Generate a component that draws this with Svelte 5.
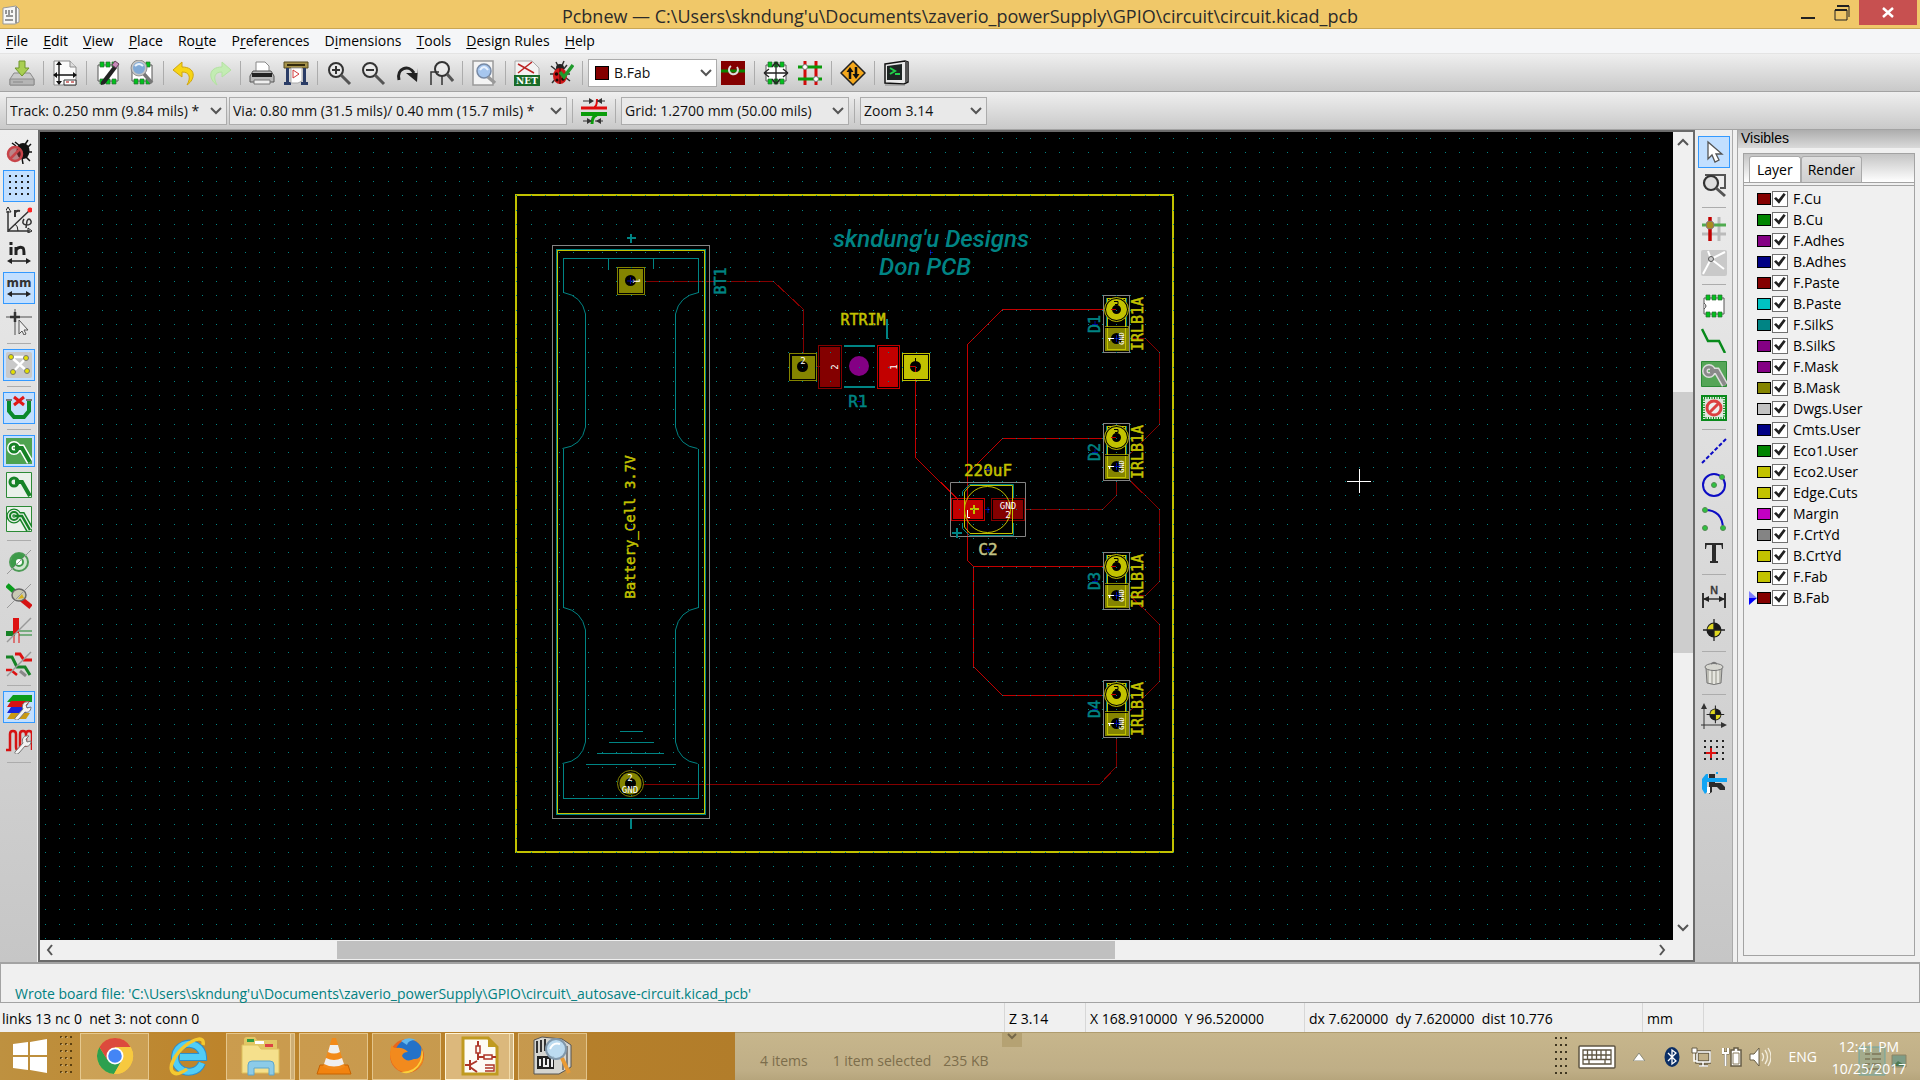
<script>
  const mag = '<circle cx="10" cy="10" r="7" fill="#f4f4f4" fill-opacity=".5" stroke="#333" stroke-width="2"/><path d="M15 15L24 24" stroke="#555" stroke-width="3"/>';
  const chips = '<path d="M3 5h20v16H3z" fill="#fff" stroke="#555"/><path d="M5 2h4v5H5zM11 2h4v5h-4zM17 2h4v5h-4zM5 19h4v5H5zM11 19h4v5h-4zM17 19h4v5h-4z" fill="#00c21c" stroke="#2c6b34" stroke-width=".7"/>';
  const padTrack = '<path d="M9 10H16L24 24" fill="none" stroke-width="4" /><circle cx="8" cy="10" r="4" fill="none" stroke-width="3"/>';
  const target = '<circle cx="13" cy="13" r="7.5" fill="#1a1a1a"/><path d="M13 13V6.500A6.500 6.500 0 0 0 6.500 13zM13 13V19.500A6.500 6.500 0 0 0 19.500 13z" fill="#e0d820"/><path d="M13 2V24M2 13H24" stroke="#222" stroke-width="1.300"/>';
  const wrench = '<path d="M9 24l8-9c-2-4 1-8 6-7l-3 3 1 3 4-1c0 5-4 6-6 5l-6 7c-2 2-5 1-4-1z" fill="#f2f2f2" stroke="#777"/>';

  const icons = {
    save: '<path d="M5 13h16l4 6v6H1v-6z" fill="#c9c9c9" stroke="#8b8b8b"/><path d="M1 19h24v6H1z" fill="#b5b5b5" stroke="#8b8b8b"/><path d="M10 1h6v7h4l-7 8-7-8h4z" fill="#a9cf52" stroke="#6e952b"/><path d="M4 22h10" stroke="#888"/>',
    page: '<path d="M2 1h16l6 6v18H2z" fill="#fafafa" stroke="#8a8a8a"/><path d="M18 1v6h6" fill="#ddd" stroke="#8a8a8a"/><path d="M7 2v22M2 15h22" stroke="#111" stroke-width="1.300"/><path d="M7 1l3 4H4zM7 25l3-4H4zM1 15l4-3v6zM25 15l-4-3v6z" fill="#111"/><path d="M12 20h12v5H12z" fill="#fff" stroke="#333"/><path d="M14 22h3M19 22h3" stroke="#a00"/>',
    modedit: chips + '<path d="M6 22L19 5l3 3L10 24l-4 1z" fill="#222"/><path d="M17 5l3-4 4 3-3 4z" fill="#c989b8" stroke="#64405c"/>',
    modview: chips + '<circle cx="10" cy="8" r="7" fill="#7fa9d6" stroke="#c4c4c4" stroke-width="2"/><circle cx="10" cy="8" r="8" fill="none" stroke="#777" stroke-width=".7"/><path d="M6 6q4-4 8 0" stroke="#e9f3fc" fill="none" stroke-width="2"/><path d="M15 14l8 9" stroke="#777" stroke-width="3.500"/>',
    undo: '<path d="M10 2L1 10l9 7v-5c8 0 9 6 5 13 9-6 9-18-5-18z" fill="#f7d515" stroke="#cfa50f"/>',
    redo: '<path d="M16 2l9 8-9 7v-5c-8 0-9 6-5 13C2 19 2 7 16 7z" fill="#c3ecb3" stroke="#b3e2a1"/>',
    print: '<path d="M7 2h9l4 4v8H7z" fill="#fff" stroke="#888"/><path d="M4 11h18l3 5v6H1v-6z" fill="#bbb" stroke="#555"/><path d="M3 13h20v4H3z" fill="#222"/><path d="M5 20h16v4H5z" fill="#efefef" stroke="#777"/>',
    plot: '<path d="M1 2h24v6H1z" fill="#a5924a" stroke="#574b20"/><path d="M4 5h18" stroke="#332a0c" stroke-width="2"/><path d="M3 8h3v14h2v3H1v-3h2zM20 8h3v14h2v3h-7v-3h2z" fill="#2a3c66"/><path d="M8 8h11v13l-4 2H8z" fill="#fff" stroke="#aaa"/><path d="M10 10v8l6-4z" fill="none" stroke="#d23a3a"/>',
    zoomin: mag + '<path d="M6 10h8M10 6v8" stroke="#333" stroke-width="2"/>',
    zoomout: mag + '<path d="M6 10h8" stroke="#333" stroke-width="2"/>',
    refresh: '<path d="M5 20C2 8 15 4 20 13" fill="none" stroke="#222" stroke-width="3"/><path d="M12 13h12V8l-1 14z" fill="#222"/>',
    fit: '<circle cx="14" cy="9" r="7" fill="#f4f4f4" fill-opacity=".5" stroke="#333" stroke-width="2"/><path d="M19 14l6 7" stroke="#555" stroke-width="3"/><path d="M3 25V12h8M14 25v-9" stroke="#333" fill="none" stroke-width="1.500"/>',
    find: '<path d="M2 1h20v24H2z" fill="#f4f4f4" stroke="#9b9b9b" stroke-width="1.500"/><circle cx="13" cy="11" r="7" fill="#a6c6ee" stroke="#7789a4" stroke-width="1.500"/><path d="M9 10q4-6 8 0" fill="none" stroke="#e8f2ff" stroke-width="2"/><path d="M17 17l7 6" stroke="#999" stroke-width="3.500"/>',
    net: '<path d="M1 1h17l7 7v17H1z" fill="#f3f3f3" stroke="#aaa"/><path d="M4 4l16 9M4 13L18 2" stroke="#b22" stroke-width="1.500"/><path d="M0 15h26v11H0z" fill="#186b28"/><text x="13" y="24" text-anchor="middle" font-family="DejaVu Serif" font-weight="700" font-size="9" fill="#fff">NET</text>',
    drc: '<path d="M3 6l19 15M2 14h20M4 23L19 5M8 2l3 6M16 1l-3 7" stroke="#333" stroke-width="1.500"/><circle cx="12" cy="8" r="4" fill="#222"/><ellipse cx="12" cy="16" rx="7" ry="8" fill="#cf1717"/><path d="M12 8v16" stroke="#300"/><circle cx="8.500" cy="14" r="1.800" fill="#200"/><circle cx="15" cy="19" r="1.800" fill="#200"/><circle cx="9" cy="20" r="1.500" fill="#200"/><path d="M12 12l4 5 9-12" fill="none" stroke="#1f9a2c" stroke-width="3.500"/>',
    pair: '<path d="M1 1h24v24H1z" fill="#840000"/><path d="M1 11h24" stroke="#0a8400" stroke-width="3"/><path d="M11 6a4.500 4.500 0 1 0 6 1" fill="none" stroke="#ddd" stroke-width="2"/>',
    modmode: chips + '<path d="M2 13h22M13 3v20" stroke="#222" stroke-width="1.300"/><path d="M1 13l5-4M1 13l5 4M25 13l-5-4M25 13l-5 4M13 2l4 5M13 2l-4 5M13 24l4-5M13 24l-4-5" stroke="#222" stroke-width="1.300"/>',
    router: '<path d="M8 1v24M19 1v24" stroke="#d20a0a" stroke-width="3"/><path d="M1 7h24M1 19h24" stroke="#0a9a0a" stroke-width="3"/><circle cx="8" cy="7" r="2.500" fill="#fff" stroke="#777"/><circle cx="19" cy="19" r="2.500" fill="#fff" stroke="#777"/>',
    warn: '<path d="M13 1l12 12-12 12L1 13z" fill="#f5a81c" stroke="#222" stroke-width="1.500" stroke-linejoin="round"/><path d="M10 19v-8M16 7v8" stroke="#111" stroke-width="2.500"/><path d="M6.500 12L10 7l3.500 5zM12.500 14l3.500 5 3.500-5z" fill="#111"/>',
    console: '<path d="M2 4l20-3 3 1v20l-4 2-19-1z" fill="#e9e9e9" stroke="#111" stroke-width="1.500"/><path d="M22 1v22l3-2V2z" fill="#555"/><path d="M4 6l15-2v16H4z" fill="#1d2423"/><path d="M7 8l5 3-5 3M12 14h5" fill="none" stroke="#22d04b" stroke-width="2"/><path d="M2 25h20" stroke="#888"/>',
    clearance: '<path d="M0 10h26" stroke="#e00c0c" stroke-width="3"/><path d="M0 16h26" stroke="#0a9c0a" stroke-width="4"/><path d="M13 9q3 0 3-8" fill="none" stroke="#e00c0c" stroke-width="2"/><path d="M16 17q-5 1-5 9" fill="none" stroke="#0a9c0a" stroke-width="3"/><path d="M2 3h8M16 3h8M2 23h6M14 23h8" stroke="#333"/><path d="M8 0l5 3-5 3zM21 0l-5 3 5 3zM6 20l5 3-5 3zM20 20l-5 3 5 3z" fill="#333"/>',
    nodrc: '<path d="M9 3l5 4M22 1l-4 6M18 12l7-7M16 13h10M18 16l6 6M10 7L6 4M16 19l1 6" stroke="#111" stroke-width="1.500"/><ellipse cx="17" cy="12" rx="6.500" ry="8" fill="#111"/><circle cx="9" cy="15" r="7" fill="#903035" fill-opacity=".55" stroke="#c84449" stroke-width="2.500"/><path d="M4 20L14 10" stroke="#c84449" stroke-width="2.500"/>',
    grid: '<path d="M3 3h2M9 3h2M15 3h2M21 3h2M3 9h2M9 9h2M15 9h2M21 9h2M3 15h2M9 15h2M15 15h2M21 15h2M3 21h2M9 21h2M15 21h2M21 21h2" stroke="#222" stroke-width="2"/>',
    polar: '<path d="M2 25V4M2 24h22M3 23L24 3" fill="none" stroke="#333" stroke-width="1.500"/><path d="M2 0l3 5H-1zM26 24l-4-3v5zM12 24q0-5-3-7" fill="none" stroke="#222"/><circle cx="24" cy="3" r="2.500" fill="#f22"/><path d="M9 10V3M9 6q1-3 5-2" fill="none" stroke="#333" stroke-width="2"/><path d="M18 12q-3 5 2 6 6 0 5-4-2-4-4 0l-1 7" fill="none" stroke="#333" stroke-width="1.500"/>',
    inch: '<path d="M5 6v8M5 1v3M10 14V6M10 9q3-4 7-2 1 1 1 7" fill="none" stroke="#222" stroke-width="3"/><path d="M3 20h20" stroke="#222" stroke-width="1.500"/><path d="M1 20l5-3v6zM25 20l-5-3v6z" fill="#222"/>',
    mm: '<text x="13" y="12" text-anchor="middle" font-family="DejaVu Sans" font-weight="700" font-size="12" fill="#333">mm</text><path d="M3 19h20" stroke="#222" stroke-width="1.500"/><path d="M1 19l5-3v6zM25 19l-5-3v6z" fill="#222"/>',
    cursor: '<path d="M9 0v26M0 8h26" stroke="#999" stroke-width="2"/><path d="M9 3v10M4 8h10" stroke="#333" stroke-width="2.500"/><path d="M13 11l9 10h-4l2 4-2 1-2-4-3 3z" fill="#eee" stroke="#555"/>',
    ratsnest: '<rect width="26" height="26" rx="2" fill="#c9c9c9"/><path d="M5 5l16 14M7 20L20 6M5 5h15" fill="none" stroke="#fff" stroke-width="2.500"/><g fill="#e4e000" stroke="#777"><circle cx="5" cy="5" r="2.500"/><circle cx="20" cy="6" r="2.500"/><circle cx="7" cy="20" r="2.500"/><circle cx="21" cy="19" r="2.500"/></g>',
    autodel: '<path d="M3 5v11l5 6h10l5-6V5" fill="none" stroke="#098a2c" stroke-width="4"/><path d="M0 5h6M20 5h6" stroke="#777" stroke-width="2"/><path d="M8 2l10 8M18 2L8 10" stroke="#e01717" stroke-width="3"/>',
    zone1: '<path d="M0 0h26v26H0z" fill="#4ea350"/><g stroke="#fff">' + padTrack.replace('stroke-width="4"', 'stroke-width="7"').replace('stroke-width="3"', 'stroke-width="6"') + '</g><g stroke="#168226">' + padTrack + '</g>',
    zone2: '<path d="M.5.5h25v25H.5z" fill="#eaf1ea" stroke="#2c8a36"/><g stroke="#168226">' + padTrack + '</g>',
    zone3: '<path d="M.5.5h25v25H.5z" fill="#eaf1ea" stroke="#2c8a36"/><g stroke="#168226">' + padTrack.replace('stroke-width="4"', 'stroke-width="8"').replace('stroke-width="3"', 'stroke-width="7"') + '</g><g stroke="#e6efe6">' + padTrack.replace('stroke-width="4"', 'stroke-width="5"').replace('stroke-width="3"', 'stroke-width="4.500"') + '</g><g stroke="#168226">' + padTrack.replace('stroke-width="4"', 'stroke-width="2.500"').replace('stroke-width="3"', 'stroke-width="2"') + '</g>',
    pad: '<circle cx="13" cy="13" r="9" fill="#cfe5cf" stroke="#4d9b56" stroke-width="2"/><path d="M13 4a9 9 0 0 0-6 15L19 7a9 9 0 0 0-6-3z" fill="#3d9a49"/><circle cx="13" cy="13" r="4" fill="#fff" stroke="#3d9a49" stroke-width="2"/><path d="M1 25L25 1" stroke="#999"/>',
    via: '<path d="M1 2l10 9" stroke="#0a9c1c" stroke-width="5"/><path d="M14 15l11 9" stroke="#d51212" stroke-width="5"/><ellipse cx="13" cy="12" rx="7" ry="6" fill="#c9c9b4" stroke="#666" stroke-width="1.500"/><path d="M12 16l4-5 2 4z" fill="#d8b21a"/><path d="M1 25L25 1" stroke="#999"/>',
    track: '<path d="M0 14h9v5H0z" fill="#168226"/><path d="M7 1h6v15H7z" fill="#d11"/><path d="M13 14h13M13 18h13" stroke="#168226"/><path d="M8 16v10M13 16v10" stroke="#d11"/><path d="M1 25L25 1" stroke="#999" stroke-width="1.500"/>',
    contrast: '<path d="M0 6h6l5 10h8l5 8" fill="none" stroke="#168226" stroke-width="3"/><path d="M9 3h5l4 6h8" fill="none" stroke="#d11" stroke-width="3"/><path d="M0 19h5l6 5" fill="none" stroke="#d11" stroke-width="2.500"/><path d="M14 20l6 5" stroke="#888" stroke-width="3"/><path d="M1 25L25 1" stroke="#999" stroke-width="1.500"/>',
    layers: '<path d="M7 1h19v7H1z" fill="#0c9c1c"/><path d="M5 7h19l-4 6H1z" fill="#d51212"/><path d="M5 13h19l-4 6H1z" fill="#1626d8"/><path d="M5 19h19l-4 6H1z" fill="#c99a14"/>' + wrench,
    micro: '<path d="M0 22h4V6q0-3 3-3t3 3v13q0 3 2 3t2-3V6q0-3 3-3t3 3v13M20 6q0-3 3-3t3 3v16" fill="none" stroke="#d51212" stroke-width="2.500"/>' + wrench,
    select: '<path d="M7 3v17l4-4 3 7 4-2-3-6h6z" fill="#fff" stroke="#555" stroke-width="1.300"/>',
    zoomarea: '<path d="M4 2h20v13h-5" fill="none" stroke="#555" stroke-width="2"/><circle cx="10" cy="10" r="7" fill="#ddd" stroke="#333" stroke-width="2.200"/><path d="M15 15l9 8" stroke="#555" stroke-width="3"/>',
    highlight: '<path d="M18 1v24M1 18h24" stroke="#bbb" stroke-width="3"/><path d="M1 9h24" stroke="#50ab50" stroke-width="3"/><path d="M9 1v24" stroke="#c20000" stroke-width="3.500"/><circle cx="9" cy="9" r="4" fill="#a98c1f" stroke="#877"/>',
    localrats: '<rect width="26" height="26" rx="2" fill="#c9c9c9"/><path d="M7 1l3 8L2 24M10 9l14-7M10 9l13 10" fill="none" stroke="#fff" stroke-width="2"/><circle cx="10" cy="9" r="2.500" fill="#ccc" stroke="#555"/>',
    module: chips + '<path d="M3 10q4 3 0 6" fill="#ccc" stroke="#555"/>',
    addtrack: '<path d="M1 2l6 12h11l6 12" fill="none" stroke="#098a1c" stroke-width="2.500"/>',
    zone: '<path d="M.5.5h25v25H.5z" fill="#55a557" stroke="#2c8a36"/><g stroke="#ddd">' + padTrack.replace('stroke-width="4"', 'stroke-width="7"').replace('stroke-width="3"', 'stroke-width="6"') + '</g><g stroke="#8a8a8a">' + padTrack + '</g>',
    keepout: '<path d="M1 1h24v24H1z" fill="#dfe8df" stroke="#0a8a1c" stroke-width="2"/><path d="M3 3h20v20H3z" fill="none" stroke="#0a8a1c" stroke-dasharray="1 1.500" stroke-width="2"/><circle cx="13" cy="13" r="7" fill="#eee" stroke="#dc4040" stroke-width="3"/><path d="M8 18L18 8" stroke="#dc4040" stroke-width="3"/>',
    line: '<path d="M1 25L25 1" stroke="#0c0cc4" stroke-width="2" stroke-dasharray="4 2"/>',
    circle: '<circle cx="13" cy="13" r="11" fill="none" stroke="#0c0cc4" stroke-width="2"/><circle cx="13" cy="13" r="2.500" fill="#2fc23f" stroke="#585"/><circle cx="21" cy="5" r="2.500" fill="#2fc23f" stroke="#585"/>',
    arc: '<path d="M4 4q17 0 18 18" fill="none" stroke="#0c0cc4" stroke-width="2"/><g fill="#2fc23f" stroke="#585"><circle cx="4" cy="4" r="2.500"/><circle cx="4" cy="22" r="2.500"/><circle cx="22" cy="22" r="2.500"/></g>',
    text: '<path d="M5 4h16M13 4v18M9 22h8" stroke="#2b2b2b" stroke-width="2"/><path d="M13 4v18" stroke="#2b2b2b" stroke-width="4"/><path d="M4 3h2l-1 6H4zM22 3h-2l1 6h1z" fill="#2b2b2b"/>',
    dim: '<path d="M2 10v15M24 10v15" stroke="#333" stroke-width="2"/><path d="M3 16h20" stroke="#333" stroke-width="1.500"/><path d="M2 16l6-3v6zM24 16l-6-3v6z" fill="#222"/><text x="13" y="11" text-anchor="middle" font-family="DejaVu Sans" font-size="11" fill="#333" stroke="#333" stroke-width=".4">N</text>',
    target,
    trash: '<path d="M5 8h16l-1 15q-7 3-14 0z" fill="#bdbdb5" stroke="#777"/><path d="M9 10v13M13 10v14M17 10v13" stroke="#f3f3ee" stroke-width="1.500"/><ellipse cx="13" cy="7" rx="9" ry="3.500" fill="#d6d6d0" stroke="#777"/><path d="M10 4q3-3 6 0" fill="none" stroke="#777" stroke-width="1.500"/>',
    origin: '<path d="M3 26V3M0 22h24" stroke="#333"/><path d="M3 0l3 6H0zM26 22l-6-3v6z" fill="#333"/><g transform="translate(4 1) scale(.8)">' + target + '</g>',
    gridorigin: '<path d="M3 4h2M9 4h2M15 4h2M21 4h2M3 10h2M9 10h2M15 10h2M21 10h2M3 16h2M15 16h2M21 16h2M3 22h2M9 22h2M15 22h2M21 22h2" stroke="#222" stroke-width="2"/><path d="M10 11v10M5 16h10" stroke="#d11" stroke-width="2"/>',
    measure: '<path d="M8 3v20l3-2v-5h5l3 3h5v-3l-4-4h-6V3z" fill="#2b2b2b"/><path d="M1 8l4-5h2v4h19v4H6v10L4 23l-3-5z" fill="#12a5f4"/><path d="M6 16h3v6H6z" fill="#fff"/><path d="M15 2h2" stroke="#12a5f4" stroke-width="2"/>',
  };

  const menus = [['', 'F', 'ile'], ['', 'E', 'dit'], ['', 'V', 'iew'], ['', 'P', 'lace'], ['Ro', 'u', 'te'], ['P', 'r', 'eferences'], ['D', 'i', 'mensions'], ['', 'T', 'ools'], ['', 'D', 'esign Rules'], ['', 'H', 'elp']];
  const topA = ['save', '|', 'page', '|', 'modedit', 'modview', '|', 'undo', 'redo', '|', 'print', 'plot', '|', 'zoomin', 'zoomout', 'refresh', 'fit', '|', 'find', '|', 'net', 'drc', '|'];
  const topB = ['pair', '|', 'modmode', 'router', '|', 'warn', '|', 'console'];
  const left = ['nodrc', 'grid', 'polar', 'inch', 'mm', 'cursor', '|', 'ratsnest', '|', 'autodel', '|', 'zone1', 'zone2', 'zone3', '|', 'pad', 'via', 'track', 'contrast', '|', 'layers', 'micro', '|'];
  const right = ['select', 'zoomarea', '|', 'highlight', 'localrats', '|', 'module', 'addtrack', 'zone', 'keepout', '|', 'line', 'circle', 'arc', 'text', '|', 'dim', 'target', '|', 'trash', '|', 'origin', 'gridorigin', 'measure'];
  const pressed = new Set(['grid', 'mm', 'ratsnest', 'autodel', 'zone1', 'layers', 'select']);

  const layers = [
    ['F.Cu', '#840000'], ['B.Cu', '#008400'], ['F.Adhes', '#840084'], ['B.Adhes', '#000084'], ['F.Paste', '#840000'],
    ['B.Paste', '#00c2c2'], ['F.SilkS', '#008484'], ['B.SilkS', '#840084'], ['F.Mask', '#840084'], ['B.Mask', '#848400'],
    ['Dwgs.User', '#c2c2c2'], ['Cmts.User', '#000084'], ['Eco1.User', '#008400'], ['Eco2.User', '#c2c200'], ['Edge.Cuts', '#c2c200'],
    ['Margin', '#c200c2'], ['F.CrtYd', '#848484'], ['B.CrtYd', '#c2c200'], ['F.Fab', '#c2c200'], ['B.Fab', '#840000'],
  ];

  let dots = '';
  for (let j = -4; j < 56; j++) {
    for (let i = -32; i < 90; i++) {
      dots += `M${Math.round(502 + i * 14.281)} ${Math.round(181 + j * 14.281)}h1v1h-1z`;
    }
  }
  const diodes = [{ n: 'D1', y: 0 }, { n: 'D2', y: 128 }, { n: 'D3', y: 257 }, { n: 'D4', y: 385 }];
</script>

{#snippet tools(list)}
  {#each list as name}
    {#if name === '|'}
      <span class="sep"></span>
    {:else}
      <button class="tool" class:on={pressed.has(name)} aria-label={name}>
        <svg width="26" height="26" viewBox="0 0 26 26">{@html icons[name]}</svg>
      </button>
    {/if}
  {/each}
{/snippet}

{#snippet combo(label, value, cls, swatch)}
  <div class="combo {cls}">
    {#if swatch}<span class="swatch big"></span>{/if}
    <select aria-label={label}><option>{value}</option></select>
    <svg class="chev" width="12" height="8" viewBox="0 0 12 8"><path d="M1 1l5 5 5-5" fill="none" stroke="#555" stroke-width="2" /></svg>
  </div>
{/snippet}

<div class="app">
  <header class="title">
    <svg class="appicon" width="20" height="20" viewBox="0 0 20 20"><path d="M1 3l13-2 3 3v13l-4 2H1z" fill="#f6f6f6" stroke="#999" /><path d="M14 2v16M4 5v4M7 5v5M10 5v3M4 11h7M3 15h8" stroke="#777" stroke-width="1.500" /></svg>
    <h1>Pcbnew — C:\Users\skndung'u\Documents\zaverio_powerSupply\GPIO\circuit\circuit.kicad_pcb</h1>
    <div class="winctl">
      <button aria-label="Minimize"><svg width="16" height="16" viewBox="0 0 16 16"><path d="M1 13h14" stroke="#222" stroke-width="2" /></svg></button>
      <button aria-label="Restore"><svg width="16" height="16" viewBox="0 0 16 16"><path d="M3 1h12v11M1 5h12v10H1z" fill="none" stroke="#222" /><path d="M1 5h12M3 1h12" stroke="#222" stroke-width="2" /></svg></button>
      <button class="close" aria-label="Close"><svg width="12" height="12" viewBox="0 0 12 12"><path d="M1 1l10 9M11 1L1 10" stroke="#fff" stroke-width="2.500" /></svg></button>
    </div>
  </header>

  <nav class="menu">
    {#each menus as [a, b, c]}<button>{a}<u>{b}</u>{c}</button>{/each}
  </nav>

  <div class="bar">
    {@render tools(topA)}
    {@render combo('Layer', 'B.Fab', 'layer', true)}
    {@render tools(topB)}
  </div>
  <div class="bar">
    {@render combo('Track', 'Track: 0.250 mm (9.84 mils) *', 'trackw', false)}
    {@render combo('Via', 'Via: 0.80 mm (31.5 mils)/ 0.40 mm (15.7 mils) *', 'viaw', false)}
    {@render tools(['|', 'clearance', '|'])}
    {@render combo('Grid', 'Grid: 1.2700 mm (50.00 mils)', 'gridw', false)}
    <span class="sep"></span>
    {@render combo('Zoom', 'Zoom 3.14', 'zoomw', false)}
  </div>

  <main>
    <aside class="vbar">{@render tools(left)}</aside>

    <section class="frame">
      <div class="canvas">
        <svg class="board" width="100%" height="100%">
          <g transform="translate(-40 -132)">
            <g fill="none" shape-rendering="crispEdges">
              <g stroke="#840000">
                <path d="M644 281.500H773.500L803.500 309.500V354" />
                <path d="M816 366.500H820" />
                <path d="M1128 338.500H1145.500L1159.500 352.500V424.500L1130 454" />
                <path d="M1116.500 480V495.500L1102.500 509.500H1024" />
                <path d="M1130 480.500L1159.500 509.500V581.500L1145.500 595.500H1128M1130 595.500L1159.500 624.500V681.500L1130 711" />
                <path d="M1116.500 738V766.500L1099.500 784.500H643" />
              </g>
              <g stroke="#c20000">
                <path d="M915.500 366.500V457.500L958 499.500" />
                <path d="M1104 309.500H1002.500L967.500 344.500V560.500L973.500 566.500H1104M1104 438.500H1002.500L967.500 473.500M973.500 566.500V666.500L1002.500 695.500H1104" />
              </g>
              <rect x="516" y="195" width="657" height="657" stroke="#c2c200" stroke-width="2" />
              <rect x="552.500" y="245.500" width="157" height="573" stroke="#848484" />
              <rect x="556.500" y="249.500" width="149" height="565" stroke="#008484" />
              <rect x="557.500" y="250.500" width="147" height="563" stroke="#c2c200" />
            </g>

            <g fill="none" stroke="#008484">
              <path shape-rendering="crispEdges" d="M563.500 292.500V258.500H698.500V292.500M585.500 314V427M675.500 314V427M563.500 449V607.500M698.500 449V607.500M585.500 630V742M675.500 630V742M563.500 764V798.500H698.500V764M608.500 259V270M653.500 259V269" />
              <path d="M563.500 292.500Q582 296 585.500 314M698.500 292.500Q679 296 675.500 314M585.500 427Q582 446 562.500 448.500M675.500 427Q679 446 697.500 448.500M563.500 607.500Q582 611 585.500 630M698.500 607.500Q679 611 675.500 630M585.500 742Q582 761 562.500 763.500M675.500 742Q679 761 697.500 763.500" />
              <path shape-rendering="crispEdges" d="M620 731.500H643M609 742.500H654M597 753.500H664M586 764.500H676" />
              <path shape-rendering="crispEdges" stroke-width="2" d="M627 238H636M631 234V243M631 819V829M844 346H875M844 387H875M887 319V339" />
            </g>

            <g shape-rendering="crispEdges">
              <rect x="617.500" y="267.500" width="27" height="27" fill="none" stroke="#848400" />
              <rect x="619" y="269" width="24" height="24" fill="#848400" />
              <rect x="789.500" y="353.500" width="27" height="27" fill="none" stroke="#848400" />
              <rect x="792" y="356" width="23" height="23" fill="#848400" />
              <rect x="818.500" y="345.500" width="23" height="43" fill="none" stroke="#840000" />
              <rect x="820" y="347" width="20" height="40" fill="#840000" />
              <rect x="877.500" y="345.500" width="22" height="43" fill="none" stroke="#c20000" />
              <rect x="879" y="347" width="19" height="40" fill="#c20000" />
              <rect x="902.500" y="353.500" width="27" height="27" fill="none" stroke="#c2c200" />
              <rect x="904" y="355" width="24" height="24" fill="#c2c200" />
            </g>
            <circle cx="630.500" cy="280.500" r="5.500" />
            <circle cx="802.500" cy="366.500" r="5.500" />
            <circle cx="915.500" cy="366.500" r="5.500" />
            <path d="M915.500 358V366" stroke="#000" />
            <path d="M910 366.500H915.500V372" fill="none" stroke="#c20000" />
            <circle cx="859" cy="366" r="10" fill="#840084" />
            <circle cx="630.500" cy="783.500" r="13" fill="none" stroke="#848400" />
            <circle cx="630.500" cy="783.500" r="11" fill="#848400" />
            <circle cx="630.500" cy="783.500" r="5.500" />

            <rect x="951.500" y="498.500" width="33" height="22" fill="none" stroke="#c20000" />
            <rect x="953" y="500" width="30" height="19" fill="#c20000" />
            <rect x="991.500" y="498.500" width="33" height="22" fill="none" stroke="#840000" />
            <rect x="993" y="500" width="30" height="19" fill="#840000" />
            <g fill="none">
              <path d="M950.500 482.500H1025.500V536.500H950.500Z" stroke="#848484" />
              <path d="M962.500 496V491.500L969.500 484.500H1013.500V498M1013.500 523V535.500H969.500L962.500 528.500V523" stroke="#008484" />
              <path d="M970 485.500H1012.500V533.500H970L964.500 527V492Z" stroke="#c2c200" />
              <circle cx="987.500" cy="509.500" r="23" stroke="#c2c200" />
              <path d="M970 509H979M974 505V514" stroke="#c2c200" stroke-width="2" />
              <path d="M952 533H962M957 528V538" stroke="#008484" stroke-width="2" />
            </g>

            {#each diodes as d}
              <g transform="translate(0 {d.y})">
                <rect x="1105" y="326" width="24" height="25" fill="#848400" />
                <g fill="none" shape-rendering="crispEdges">
                  <rect x="1103.500" y="295.500" width="26" height="57" stroke="#848484" />
                  <path d="M1106.500 326V298.500H1126.500V326" stroke="#008484" />
                  <rect x="1107.500" y="298.500" width="18" height="51" stroke="#c2c200" />
                  <path d="M1105 327.500H1128" stroke="#000" />
                </g>
                <circle cx="1116.500" cy="309.500" r="12" fill="#000" stroke="#c2c200" />
                <circle cx="1116.500" cy="309.500" r="7.500" fill="none" stroke="#c2c200" stroke-width="6" />
                <path d="M1111 309.500H1116" stroke="#c20000" />
                <path d="M1114 301.500H1118V304.500H1115" fill="none" stroke="#000" />
                <circle cx="1116.500" cy="338.500" r="5.500" />
                <path d="M1113 338.500H1120M1116.500 335V342M1092 324.500H1098M1095 321V327" stroke="#0000a0" />
                <text class="w" transform="translate(1124 338.500) rotate(-90)">GND</text>
                <path d="M1108 338.500H1114M1109.500 338V341" stroke="#fff" fill="none" />
                <text class="silk s15" transform="translate(1100 324) rotate(-90)">{d.n}</text>
                <text class="fab s15" transform="translate(1143 324) rotate(-90)">IRLB1A</text>
              </g>
            {/each}

            <text class="head" x="931" y="247">skndung′u Designs</text>
            <text class="head" x="925" y="275">Don PCB</text>
            <text class="silk s15" transform="translate(726 281) rotate(-90)">BT1</text>
            <text class="fab s14" transform="translate(635 527) rotate(-90)">Battery_Cell 3.7V</text>
            <text class="fab s15" x="863" y="325">RTRIM</text>
            <text class="silk s16" x="858" y="407">R1</text>
            <text class="fab s16" x="988" y="476">220uF</text>
            <text class="mod s16" x="988" y="555">C2</text>
            <text class="w big" x="1008" y="509">GND</text>
            <text class="w big" x="1008" y="518">2</text>
            <text class="w big" x="630" y="781">2</text>
            <text class="w big" x="630" y="793">GND</text>
            <text class="w big" transform="translate(633 281) rotate(90)">1</text>
            <text class="w big" transform="translate(838 367) rotate(-90)">2</text>
            <text class="w big" transform="translate(897 367) rotate(-90)">1</text>
            <text class="w big" x="803" y="364">2</text>
            <path d="M967.500 510V517.500H970" fill="none" stroke="#fff" />
            <path d="M627 281H634M630.500 277V284M985 509.500H990M988 507V513M985 549.500H990M988 547V552M985 469.500H990M988 467V472M930 252.500H933M930.500 250V255M628 528.500H633M857 401.500H861" stroke="#0000a0" />
            <path d={dots} fill="#008484" shape-rendering="crispEdges" />
            <path d="M1347 481.500H1371M1359.500 469V493" stroke="#fff" shape-rendering="crispEdges" />
          </g>
        </svg>
      </div>
      <div class="vscroll">
        <svg width="12" height="8" viewBox="0 0 12 8"><path d="M1 7l5-5 5 5" fill="none" stroke="#555" stroke-width="2" /></svg>
        <div class="vtrack"><span class="pre"></span><span class="thumb"></span><span class="post"></span></div>
        <svg width="12" height="8" viewBox="0 0 12 8"><path d="M1 1l5 5 5-5" fill="none" stroke="#555" stroke-width="2" /></svg>
      </div>
      <div class="hscroll">
        <svg width="8" height="12" viewBox="0 0 8 12"><path d="M6 1L2 6l4 5" fill="none" stroke="#555" stroke-width="2" /></svg>
        <div class="htrack"><span class="pre"></span><span class="thumb"></span><span class="post"></span></div>
        <svg width="8" height="12" viewBox="0 0 8 12"><path d="M2 1l4 5-4 5" fill="none" stroke="#555" stroke-width="2" /></svg>
      </div>
    </section>

    <aside class="vbar rightbar">{@render tools(right)}</aside>

    <aside class="visibles">
      <h2>Visibles</h2>
      <div class="book">
        <div class="tabs" role="tablist">
          <button role="tab" aria-selected="true" class="active">Layer</button>
          <button role="tab" aria-selected="false">Render</button>
        </div>
        <ul>
          {#each layers as [name, color], i}
            <li>
              <span class="mark">{#if i === 19}<svg width="8" height="14" viewBox="0 0 8 14"><path d="M0 0l8 7H0z" fill="#8080ff" /><path d="M0 14l8-7H0z" fill="#0000ff" /></svg>{/if}</span>
              <span class="swatch" style="background:{color}"></span>
              <input type="checkbox" id="ly{i}" checked />
              <label for="ly{i}">{name}</label>
            </li>
          {/each}
        </ul>
      </div>
    </aside>
  </main>

  <section class="message">Wrote board file: 'C:\Users\skndung'u\Documents\zaverio_powerSupply\GPIO\circuit\_autosave-circuit.kicad_pcb'</section>
  <section class="status">
    <span class="grow">links 13 nc 0&nbsp; net 3: not conn 0</span>
    <span class="f1">Z 3.14</span>
    <span class="f2">X 168.910000&nbsp; Y 96.520000</span>
    <span class="f3">dx 7.620000&nbsp; dy 7.620000&nbsp; dist 10.776</span>
    <span class="f4">mm</span>
    <span class="f5"></span>
  </section>

  <footer class="taskbar">
    <div class="apps">
      <button class="start" aria-label="Start"><svg width="34" height="34" viewBox="0 0 34 34"><path d="M0 5l15-2v13H0zM17 3l17-3v16H17zM0 18h15v13L0 29zM17 18h17v16l-17-3z" fill="#fff" /></svg></button>
      <svg class="grip" width="12" height="40" viewBox="0 0 12 40"><path d="M1 0v40M6 0v40M11 0v40" stroke="#5c4010" stroke-width="2" stroke-dasharray="2 5" /><path d="M2 1v39M7 1v39" stroke="#ecd9b0" stroke-dasharray="1 6" /></svg>
      <button class="task run" aria-label="Chrome"><svg width="38" height="38" viewBox="0 0 38 38"><circle cx="19" cy="19" r="18" fill="#f7c93f" /><path d="M19 19L3.400 10A18 18 0 0 1 34.600 10H19z" fill="#dc4a3d" /><path d="M3.400 10A18 18 0 0 0 18 37l8-14-7-4-8 3z" fill="#2da04f" /><path d="M3.400 10l8 13 7-13z" fill="#dc4a3d" /><path d="M34.600 10H19v9l7 4-8 14A18 18 0 0 0 34.600 10z" fill="#f7c93f" /><circle cx="19" cy="19" r="8.500" fill="#fff" /><circle cx="19" cy="19" r="6.800" fill="#4385f5" /></svg></button>
      <button class="task" aria-label="Internet Explorer"><svg width="42" height="40" viewBox="0 0 42 40"><path d="M35 27A14 14 0 1 1 36 21H13" fill="none" stroke="#2a8fd0" stroke-width="8" /><path d="M35 27A14 14 0 1 1 36 21H13" fill="none" stroke="#52cdf6" stroke-width="6" /><path d="M36 9C38 0 28 2 18 10S2 30 5 35s10 2 15-2" fill="none" stroke="#f4c92f" stroke-width="3.500" /></svg></button>
      <button class="task run multi" aria-label="Explorer"><svg width="40" height="40" viewBox="0 0 40 40"><path d="M3 4q0-3 3-3h8l2 3h20v10H3z" fill="#e2c765" /><path d="M6 3h7v3H6z" fill="#2e9c42" /><path d="M14 5h9v3h-9z" fill="#fff" /><path d="M24 8h8v3h-8z" fill="#d44" /><path d="M1 9h16l3 4h18v24H1z" fill="#f5e08c" stroke="#dec05c" /><path d="M7 39V29q0-4 4-4h18q4 0 4 4v10h-5v-7H13v7z" fill="#8ccbe8" stroke="#5ca6cd" /></svg></button>
      <button class="task run" aria-label="VLC"><svg width="36" height="40" viewBox="0 0 36 40"><path d="M4 29h28l3 9H1z" fill="#f2830f" stroke="#c96200" /><path d="M16 2h4l9 29q-11 5-22 0z" fill="#f28a1a" /><path d="M14 9h8l2 7q-6 3-12 0zM10 22q8 4 16 0l2 6q-10 5-20 0z" fill="#efefef" /></svg></button>
      <button class="task run" aria-label="Firefox"><svg width="38" height="40" viewBox="0 0 38 40"><circle cx="19" cy="20" r="17" fill="#e8661b" /><circle cx="21" cy="17" r="13.500" fill="#2472c8" /><path d="M13 5q7-5 15-1-8 0-9 5z" fill="#62b8ee" /><path d="M4 8q0 4 4 4 7-1 12 4-5 0-6 4 4 7 12 3 8 1 7-10 6 12-3 19T10 34Q-2 24 4 8z" fill="#f28a1d" /><path d="M33 10q5 12-3 21t-17 5q14 0 19-11 3-8 1-15z" fill="#fbd13b" /></svg></button>
      <button class="task run multi current" aria-label="KiCad"><svg width="40" height="40" viewBox="0 0 40 40"><path d="M3 2h25l9 9v27H3z" fill="#fdfbf5" stroke="#c09a20" stroke-width="3" /><path d="M28 1v10h10z" fill="#c09a20" /><path d="M18 5v5M18 17v7M10 24v10M10 29l7-4M10 31l7 5M5 29h5M18 21h6M32 21h4" fill="none" stroke="#ad3527" stroke-width="2" /><path d="M16 10h4v7h-4zM24 19h8v4h-8zM25 29h9v6h-9M25 32h8" fill="none" stroke="#ad3527" stroke-width="1.500" /></svg></button>
      <button class="task run" aria-label="Pcbnew"><svg width="42" height="40" viewBox="0 0 42 40"><path d="M2 4l8-3 20 2 9 6v22l-12 7H2z" fill="#d5d5d0" stroke="#555" /><path d="M5 20h17v13H5z" fill="#222" /><path d="M8 23v7M12 22v8h4v-7M20 23v8" fill="none" stroke="#eee" stroke-width="2" /><path d="M5 5v12M9 4v12M13 3v12" stroke="#333" stroke-width="2" /><path d="M35 10v20M31 22v12" stroke="#666" stroke-width="1.500" /><circle cx="24" cy="13" r="10" fill="#b9dcf3" fill-opacity=".9" stroke="#8198ab" stroke-width="2" /><path d="M18 13q3-7 10-5" fill="none" stroke="#fff" stroke-width="2" /><path d="M30 22l7 15" stroke="#e99a35" stroke-width="4" /></svg></button>
    </div>
    <div class="glass">
      <span class="info"><span>4 items</span><span>1 item selected</span><span>235 KB</span></span>
      <svg class="down" width="20" height="14" viewBox="0 0 20 14"><path d="M0 0h20v14H0z" fill="#b5a273" /><path d="M6 1l4 4 4-4" fill="none" stroke="#75684a" stroke-width="2" /></svg>
      <svg class="views" width="50" height="30" viewBox="0 0 50 30"><path d="M1 1h26v28H1z" fill="#a4ab8c" stroke="#6fa7a0" /><path d="M7 8h5M7 13h5M7 18h5M7 23h5M14 8h9M14 13h9M14 18h9M14 23h9" stroke="#7c7657" stroke-width="1.500" /><path d="M34 9h14v12H34z" fill="#7f9c86" stroke="#8c8465" /><path d="M35 20l5-5 8 5z" fill="#4f7a52" /></svg>
      <div class="tray">
        <svg width="12" height="40" viewBox="0 0 12 40"><path d="M1 0v40M6 0v40M11 0v40" stroke="#3f3620" stroke-width="2" stroke-dasharray="2 5" /></svg>
        <svg width="38" height="24" viewBox="0 0 38 24"><rect x="1" y="1" width="36" height="22" rx="1" fill="#fff" stroke="#5f5643" stroke-width="1.500" /><path d="M5 5h28v14H5zM5 10h28M5 14.500h28M9.500 5v10M14 5v10M18.500 5v10M23 5v10M28 5v10M11 14v5M27 14v5" fill="none" stroke="#5f5643" stroke-width="1.300" /></svg>
        <svg class="tri" width="12" height="8" viewBox="0 0 12 8"><path d="M6 0l6 8H0z" fill="#fff" stroke="#887" /></svg>
        <svg width="16" height="22" viewBox="0 0 16 22"><ellipse cx="8" cy="11" rx="7.500" ry="10" fill="#0b2f66" /><path d="M4 7l8 8-4 3V4l4 3-8 8" fill="none" stroke="#fff" stroke-width="1.300" /></svg>
        <svg width="20" height="20" viewBox="0 0 20 20"><path d="M6 5h13v10H6zM12 15v4M8 19h9" fill="none" stroke="#665c45" stroke-width="3.500" /><path d="M6 5h13v10H6zM12 15v4M8 19h9M3 1v13h3" fill="none" stroke="#fff" stroke-width="1.500" /><path d="M1 1h5v5H1z" fill="#fff" stroke="#665c45" /></svg>
        <svg width="20" height="20" viewBox="0 0 20 20"><path d="M9 3h3V1h4v2h3v16H9z" fill="#fff" stroke="#665c45" stroke-width="1.500" /><path d="M11 6h6v11h-6z" fill="none" stroke="#897c5e" /><path d="M3.500 6v13M1 1v5h5V1" fill="none" stroke="#665c45" stroke-width="3" /><path d="M1 1v5h5V1M3.500 6v13" fill="none" stroke="#fff" stroke-width="2" /></svg>
        <svg class="spk" width="22" height="20" viewBox="0 0 22 20"><path d="M1 7h4l5-6v18l-5-6H1z" fill="#fff" stroke="#665c45" /><path d="M13 6q3 4 0 8M16 3q5 7 0 14M19 1q6 9 0 18" fill="none" stroke="#f3eddd" stroke-width="1.300" /></svg>
        <span class="lang">ENG</span>
        <time><span>12:41 PM</span><span>10/25/2017</span></time>
      </div>
    </div>
  </footer>
</div>

<style>
  :global(body) { margin: 0; }
  .app { display: flex; flex-direction: column; min-height: 100vh; background: #f0f0f0; color: #000; font-family: "Open Sans", "Noto Sans", sans-serif; font-size: 14px; line-height: 20px; overflow: hidden; }
  button { font: inherit; color: inherit; background: none; border: 0; padding: 0; }
  svg { display: block; flex: none; }

  .title { display: grid; grid-template-columns: 120px 1fr 120px; height: 28px; background: #f0c869; border-bottom: 1px solid #c9a654; align-items: center; }
  .appicon { margin-left: 2px; }
  h1 { margin: 0; text-align: center; font-size: 18px; line-height: 28px; padding-top: 2px; font-weight: 400; color: #2b2b2b; white-space: nowrap; }
  .winctl { display: flex; align-self: start; justify-content: flex-end; padding-right: 3px; }
  .winctl button { width: 34px; height: 25px; display: grid; place-items: center; flex: none; }
  .winctl .close { width: 58px; background: #c75050; }

  .menu { display: flex; gap: 15px; height: 24px; padding: 0 6px; background: #f5f6f8; border-bottom: 1px solid #e4e4e4; }
  .menu u { text-underline-offset: 2px; }

  .bar { display: flex; align-items: center; gap: 2px; height: 37px; padding: 0 6px; background: linear-gradient(#efefef, #c9c9c9); border-bottom: 1px solid #a3a3a3; }
  .tool { width: 32px; height: 32px; flex: none; display: grid; place-items: center; box-sizing: border-box; }
  .tool.on { background: #c2dfff; border: 1px solid #3399ff; }
  .bar .sep { width: 1px; height: 24px; margin: 0 3px; background: #acacac; }

  .combo { display: flex; align-items: center; box-sizing: border-box; height: 28px; border: 1px solid #acacac; background: #e9e9e9; padding: 0 4px 0 3px; flex: none; }
  .combo select { appearance: none; flex: 1; min-width: 0; border: 0; background: none; font: inherit; color: #111; padding: 0; height: 24px; }
  .chev { pointer-events: none; }
  .combo.layer { width: 129px; margin-right: -2px; background: #fff; padding-left: 6px; gap: 5px; }
  .trackw { width: 221px; }
  .viaw { width: 338px; }
  .gridw { width: 228px; }
  .zoomw { width: 127px; }
  .swatch { width: 14px; height: 12px; box-sizing: border-box; border: 1px solid #000; flex: none; }
  .swatch.big { height: 14px; background: #840000; }

  main { flex: 1; display: flex; min-height: 0; }
  .vbar { width: 37px; flex: none; display: flex; flex-direction: column; align-items: center; gap: 2px; padding-top: 6px; box-sizing: border-box; background: linear-gradient(#eee, #c6c6c6); }
  .vbar .sep { width: 24px; height: 1px; margin: 3px 0; background: #acacac; }
  .rightbar { width: 38px; border-right: 1px solid #aaa; }

  .frame { flex: 1; min-width: 0; margin-left: 1px; border: 2px solid #6b6b6b; display: grid; grid-template-columns: 1fr 20px; grid-template-rows: 1fr 20px; background: #f0f0f0; }
  .canvas { background: #000; min-width: 0; min-height: 0; overflow: hidden; contain: size; }
  .vscroll { grid-row: 1; grid-column: 2; display: flex; flex-direction: column; align-items: center; padding: 6px 0 8px; }
  .vtrack { flex: 1; width: 20px; display: flex; flex-direction: column; }
  .vtrack .pre { flex: 246; }
  .vtrack .thumb { flex: 261; }
  .vtrack .post { flex: 271; }
  .hscroll { grid-column: 1 / 3; display: flex; align-items: center; padding: 0 27px 0 6px; }
  .htrack { flex: 1; height: 18px; display: flex; }
  .htrack .pre { flex: 283; }
  .htrack .thumb { flex: 777; background: #c0c0c0; }
  .htrack .post { flex: 543; }
  .thumb { background: #cdcdcd; }

  text { text-anchor: middle; font-family: "DejaVu Sans Mono", monospace; }
  .head { font-family: Roboto, sans-serif; font-style: italic; font-weight: 500; font-size: 24px; fill: #008484; }
  .silk { fill: #008484; stroke: #008484; stroke-width: 0.5; }
  .fab { fill: #c2c200; stroke: #c2c200; stroke-width: 0.5; }
  .mod { fill: #c2c284; stroke: #c2c284; stroke-width: 0.5; }
  .s14 { font-size: 14px; }
  .s15 { font-size: 15px; }
  .s16 { font-size: 16px; }
  .w { fill: #fff; font-size: 7px; }
  .w.big { font-size: 9px; }

  .visibles { width: 183px; margin-left: 4px; flex: none; display: flex; flex-direction: column; box-sizing: border-box; border-left: 1px solid #a8a8a8; }
  h2 { margin: 0; padding-left: 3px; height: 18px; font: 14px/17px "Liberation Sans", sans-serif; background: linear-gradient(#adadad, #dadada); }
  .book { flex: 1; margin: 5px 5px 6px 5px; border: 1px solid #a3a3a3; display: flex; flex-direction: column; }
  .tabs { display: flex; align-items: flex-end; height: 28px; padding-left: 5px; background: linear-gradient(#c4c4c4, #fff); border-bottom: 1px solid #a3a3a3; }
  .tabs button { height: 26px; padding: 0 6px; border: 1px solid #aaa; border-bottom: 0; border-radius: 3px 3px 0 0; background: linear-gradient(#e0e0e0, #d0d0d0); }
  .tabs .active { background: #fff; padding: 0 7px; }
  ul { list-style: none; margin: 2px 0 0; padding: 2px 0; border-top: 1px solid #a3a3a3; }
  li { display: flex; align-items: center; height: 21px; padding-left: 5px; }
  .mark { width: 8px; }
  li input { appearance: none; width: 16px; height: 16px; margin: 0 5px 0 1px; border: 1px solid #707070; background: #fff; box-sizing: border-box; }
  li input:checked::after { content: ""; display: block; width: 12px; height: 12px; margin: 1px; background: #222; clip-path: polygon(0 50%, 17% 38%, 38% 58%, 80% 4%, 98% 16%, 42% 94%); }

  .message { height: 41px; box-sizing: border-box; padding: 21px 14px 0; border: 1px solid #a3a3a3; border-top-width: 2px; color: #008080; white-space: nowrap; line-height: 18px; }
  .status { display: flex; height: 29px; line-height: 31px; white-space: nowrap; }
  .status span { padding-left: 4px; box-sizing: border-box; border-left: 1px solid #d7d7d7; flex: none; }
  .status .grow { flex: 1; padding-left: 2px; border: 0; }
  .f1 { width: 81px; }
  .f2 { width: 219px; }
  .f3 { width: 338px; }
  .f4 { width: 61px; }
  .f5 { width: 217px; }

  .taskbar { display: flex; height: 48px; background: #b8822b; }
  .apps { width: 735px; flex: none; display: flex; align-items: center; gap: 4px; background: linear-gradient(90deg, #be9140, #bd842b 30%, #b27d2a); }
  .start { margin: 0 9px 0 13px; }
  .grip { margin-right: 4px; }
  .task { width: 69px; height: 47px; display: grid; place-items: center; box-sizing: border-box; border: 1px solid transparent; flex: none; }
  .task.run { background: rgba(240, 220, 170, .28); border-color: rgba(255, 240, 200, .5); }
  .task.multi { box-shadow: inset -3px 0 0 rgba(120, 80, 20, .25), inset -4px 0 0 rgba(255, 240, 200, .6); }
  .task.current { background: rgba(255, 240, 205, .5); border-color: #fff3d3; }
  .glass { position: relative; flex: 1; display: flex; align-items: center; justify-content: space-between; background: linear-gradient(#c7b68c, #bfae86 80%, #b6a57c); border-top: 1px solid #af9c6e; box-sizing: border-box; padding: 0 10px 0 25px; }
  .info { display: flex; gap: 12px; color: #7c6d4b; padding-top: 8px; }
  .info span:first-child { margin-right: 13px; }
  .down { position: absolute; left: 267px; top: 0; }
  .views { position: absolute; right: 12px; top: 13px; }
  .tray { position: relative; display: flex; align-items: center; gap: 11px; color: #fff; }
  .tri { margin: 0 8px 0 6px; }
  .spk { margin-left: -4px; }
  .lang { margin-left: 7px; }
  time { display: flex; flex-direction: column; align-items: center; line-height: 22px; width: 82px; padding-top: 2px; }
</style>
